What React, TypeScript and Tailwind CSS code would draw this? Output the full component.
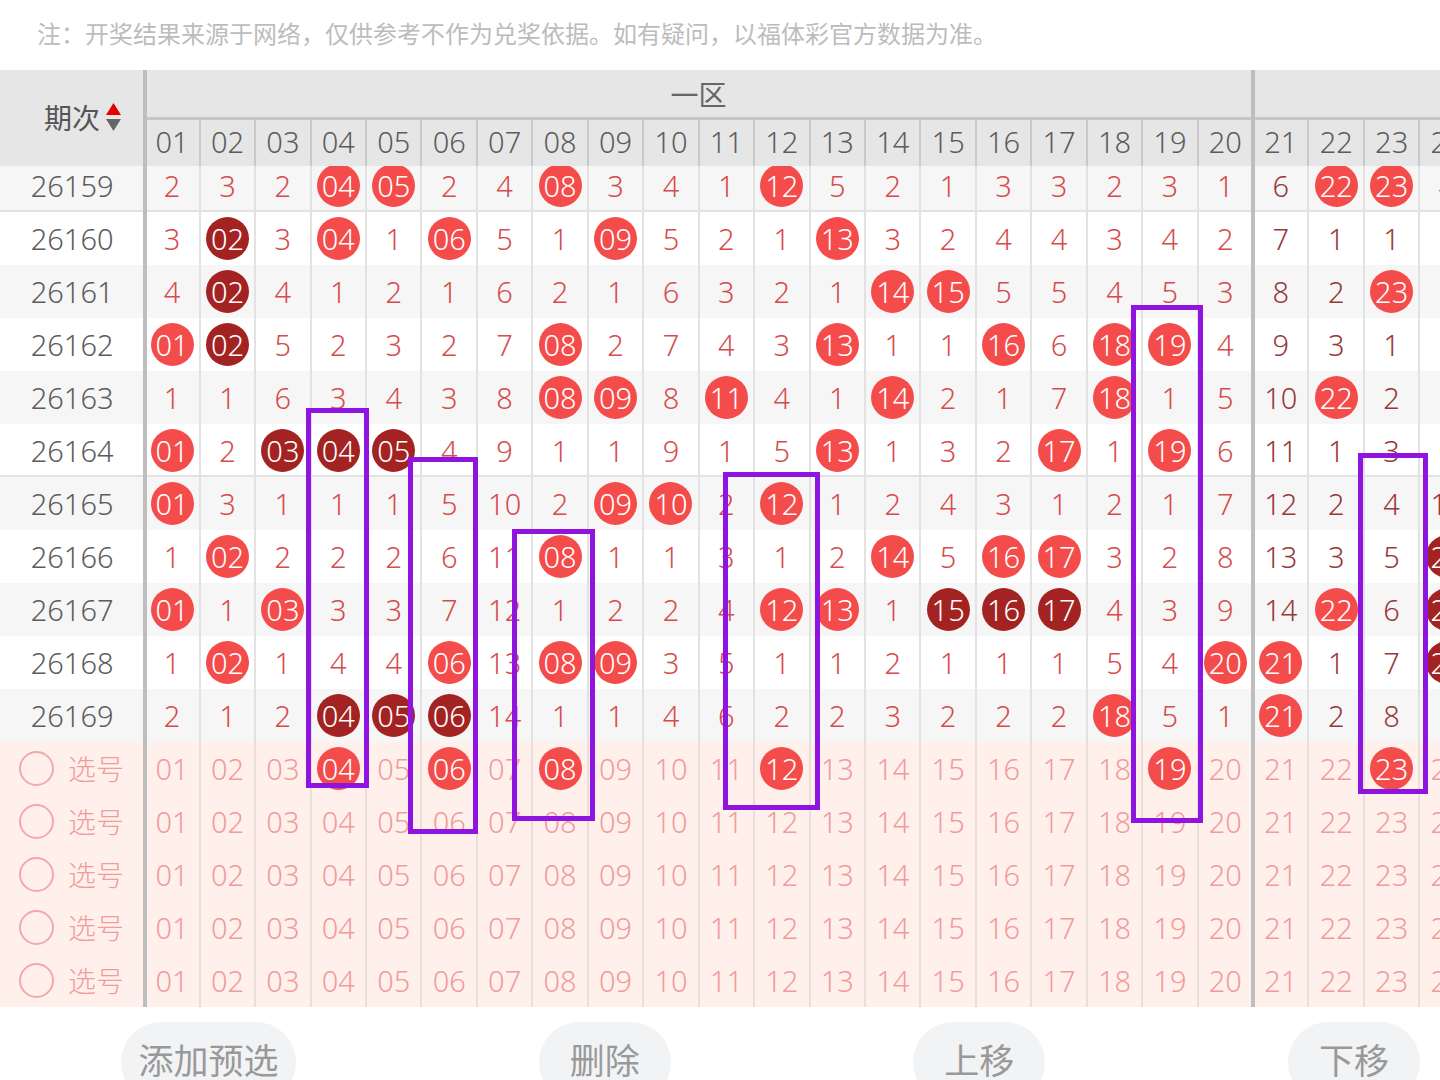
import React from "react";

const FONT = "[font-family:'Noto_Sans','Noto_Sans_CJK_SC',sans-serif]";

const rows: { id: string; cells: string }[] = [
  { id: "26159", cells: "2 3 2 r04 r05 2 4 r08 3 4 1 r12 5 2 1 3 3 2 3 1 6 r22 r23 4" },
  { id: "26160", cells: "3 d02 3 r04 1 r06 5 1 r09 5 2 1 r13 3 2 4 4 3 4 2 7 1 1 5" },
  { id: "26161", cells: "4 d02 4 1 2 1 6 2 1 6 3 2 1 r14 r15 5 5 4 5 3 8 2 r23 6" },
  { id: "26162", cells: "r01 d02 5 2 3 2 7 r08 2 7 4 3 r13 1 1 r16 6 r18 r19 4 9 3 1 7" },
  { id: "26163", cells: "1 1 6 3 4 3 8 r08 r09 8 r11 4 1 r14 2 1 7 r18 1 5 10 r22 2 8" },
  { id: "26164", cells: "r01 2 d03 d04 d05 4 9 1 1 9 1 5 r13 1 3 2 r17 1 r19 6 11 1 3 9" },
  { id: "26165", cells: "r01 3 1 1 1 5 10 2 r09 r10 2 r12 1 2 4 3 1 2 1 7 12 2 4 10" },
  { id: "26166", cells: "1 r02 2 2 2 6 11 r08 1 1 3 1 2 r14 5 r16 r17 3 2 8 13 3 5 d24" },
  { id: "26167", cells: "r01 1 r03 3 3 7 12 1 2 2 4 r12 r13 1 d15 d16 d17 4 3 9 14 r22 6 d24" },
  { id: "26168", cells: "1 r02 1 4 4 r06 13 r08 r09 3 5 1 1 2 1 1 1 5 4 r20 r21 1 7 d24" },
  { id: "26169", cells: "2 1 2 d04 d05 d06 14 1 1 4 6 2 2 3 2 2 2 r18 5 1 r21 2 8 1" },
];

const nums = Array.from({ length: 24 }, (_, i) => String(i + 1).padStart(2, "0"));
const picked = ["04", "06", "08", "12", "19", "23"];

function Ball({ value, dark }: { value: string; dark?: boolean }) {
  return (
    <span
      className={`flex h-[43px] w-[43px] shrink-0 items-center justify-center rounded-full text-white ${
        dark ? "bg-[#a32323]" : "bg-[#f44b4b]"
      }`}
    >
      {value}
    </span>
  );
}

function Cell({ value, zone }: { value: string; zone: number }) {
  const kind = value[0];
  const isBall = kind === "r" || kind === "d";
  return (
    <div
      className={`flex w-[55.45px] shrink-0 items-center justify-center border-x border-[#e2e2e2] ${
        zone === 1 ? "text-[#d64c4c]" : "text-[#983838]"
      }`}
    >
      {isBall ? <Ball value={value.slice(1)} dark={kind === "d"} /> : value}
    </div>
  );
}

function DataRow({ id, cells, index }: { id: string; cells: string; index: number }) {
  const ruled = index === 0 || index === 5;
  return (
    <div
      className={`flex h-[53px] shrink-0 ${index % 2 === 0 ? "bg-[#f6f6f6]" : "bg-white"} ${
        ruled ? "shadow-[inset_0_-2px_0_#e2e2e2]" : ""
      }`}
    >
      <div className="flex w-[144.3px] shrink-0 items-center justify-center text-[#5c5c5c]">{id}</div>
      {cells.split(" ").map((c, i) => (
        <Cell key={i} value={c} zone={i < 20 ? 1 : 2} />
      ))}
    </div>
  );
}

function PickRow({ first }: { first: boolean }) {
  return (
    <div className="flex h-[53px] shrink-0 bg-[#fff0eb] text-[#f09c9c]">
      <div className="flex w-[144.3px] shrink-0 items-center pl-[19px] text-[28px]">
        <span className="h-[35px] w-[35px] shrink-0 rounded-full border-2 border-[#f3a9a9]" />
        <span className="ml-[14px]">选号</span>
      </div>
      {nums.map((n) => (
        <div
          key={n}
          className="flex w-[55.45px] shrink-0 items-center justify-center border-x border-[#e8dfdc]"
        >
          {first && picked.includes(n) ? <Ball value={n} /> : n}
        </div>
      ))}
    </div>
  );
}

export default function App() {
  return (
    <div className={`relative h-[1080px] w-[1440px] overflow-hidden bg-white ${FONT}`}>
      <div className="flex h-[70px] items-center pb-[2px] pl-[37px] text-[24px] text-[#bcbcbc]">
        注：开奖结果来源于网络，仅供参考不作为兑奖依据。如有疑问，以福体彩官方数据为准。
      </div>

      <div className="relative text-[29px] font-light leading-none">
        {/* header */}
        <div className="flex h-[96px] bg-[#e6e6e6]">
          <div className="flex w-[144.3px] shrink-0 items-center pb-[1px] pl-[44px] text-[28px] font-normal text-[#555555]">
            期次
            <svg className="ml-[6px]" width="15" height="30" viewBox="0 0 15 30">
              <polygon points="7.5,0 15,12 0,12" fill="#e60000" />
              <polygon points="0,16 15,16 7.5,28" fill="#666666" />
            </svg>
          </div>
          <div className="flex min-w-0 flex-col">
            <div className="flex h-[47px] w-[1108.4px] items-center justify-center pt-[2px] text-[28px] font-normal text-[#666666]">
              一区
            </div>
            <div className="flex h-[49px] border-t-[3px] border-[#c6c6c6] text-[#5c5c5c]">
              {nums.map((n) => (
                <div
                  key={n}
                  className="flex w-[55.45px] shrink-0 items-center justify-center border-x border-[#c9c9c9] pb-[3px]"
                >
                  {n}
                </div>
              ))}
            </div>
          </div>
        </div>

        {/* body */}
        <div className="h-[841px] overflow-hidden">
          <div className="-mt-[7px] flex flex-col">
            {rows.map((r, i) => (
              <DataRow key={r.id} id={r.id} cells={r.cells} index={i} />
            ))}
            {[0, 1, 2, 3, 4].map((i) => (
              <PickRow key={i} first={i === 0} />
            ))}
          </div>
        </div>

        {/* zone separators */}
        <div className="absolute left-[143px] top-0 h-[937px] w-[4px] bg-[#bebebe]" />
        <div className="absolute left-[1251px] top-0 h-[937px] w-[4px] bg-[#bebebe]" />
      </div>

      {/* buttons */}
      <div className="flex gap-[242.7px] pl-[121px] pt-[15px] text-[35px] text-[#999999]">
        <div className="flex h-[80px] w-[175px] shrink-0 justify-center rounded-[40px] bg-[#f2f3f5] pt-[13px]">添加预选</div>
        <div className="flex h-[80px] w-[132px] shrink-0 justify-center rounded-[40px] bg-[#f2f3f5] pt-[13px]">删除</div>
        <div className="flex h-[80px] w-[132px] shrink-0 justify-center rounded-[40px] bg-[#f2f3f5] pt-[13px]">上移</div>
        <div className="flex h-[80px] w-[132px] shrink-0 justify-center rounded-[40px] bg-[#f2f3f5] pt-[13px]">下移</div>
      </div>

      {/* hand-drawn annotation boxes */}
      <div className="absolute left-[306px] top-[408px] h-[380px] w-[63px] border-[5px] border-[#8f14e0]" />
      <div className="absolute left-[408px] top-[457px] h-[377px] w-[70px] border-[5px] border-[#8f14e0]" />
      <div className="absolute left-[512px] top-[529px] h-[292px] w-[83px] border-[5px] border-[#8f14e0]" />
      <div className="absolute left-[723px] top-[472px] h-[338px] w-[97px] border-[5px] border-[#8f14e0]" />
      <div className="absolute left-[1131px] top-[305px] h-[518px] w-[72px] border-[5px] border-[#8f14e0]" />
      <div className="absolute left-[1358px] top-[453px] h-[341px] w-[70px] border-[5px] border-[#8f14e0]" />
    </div>
  );
}
